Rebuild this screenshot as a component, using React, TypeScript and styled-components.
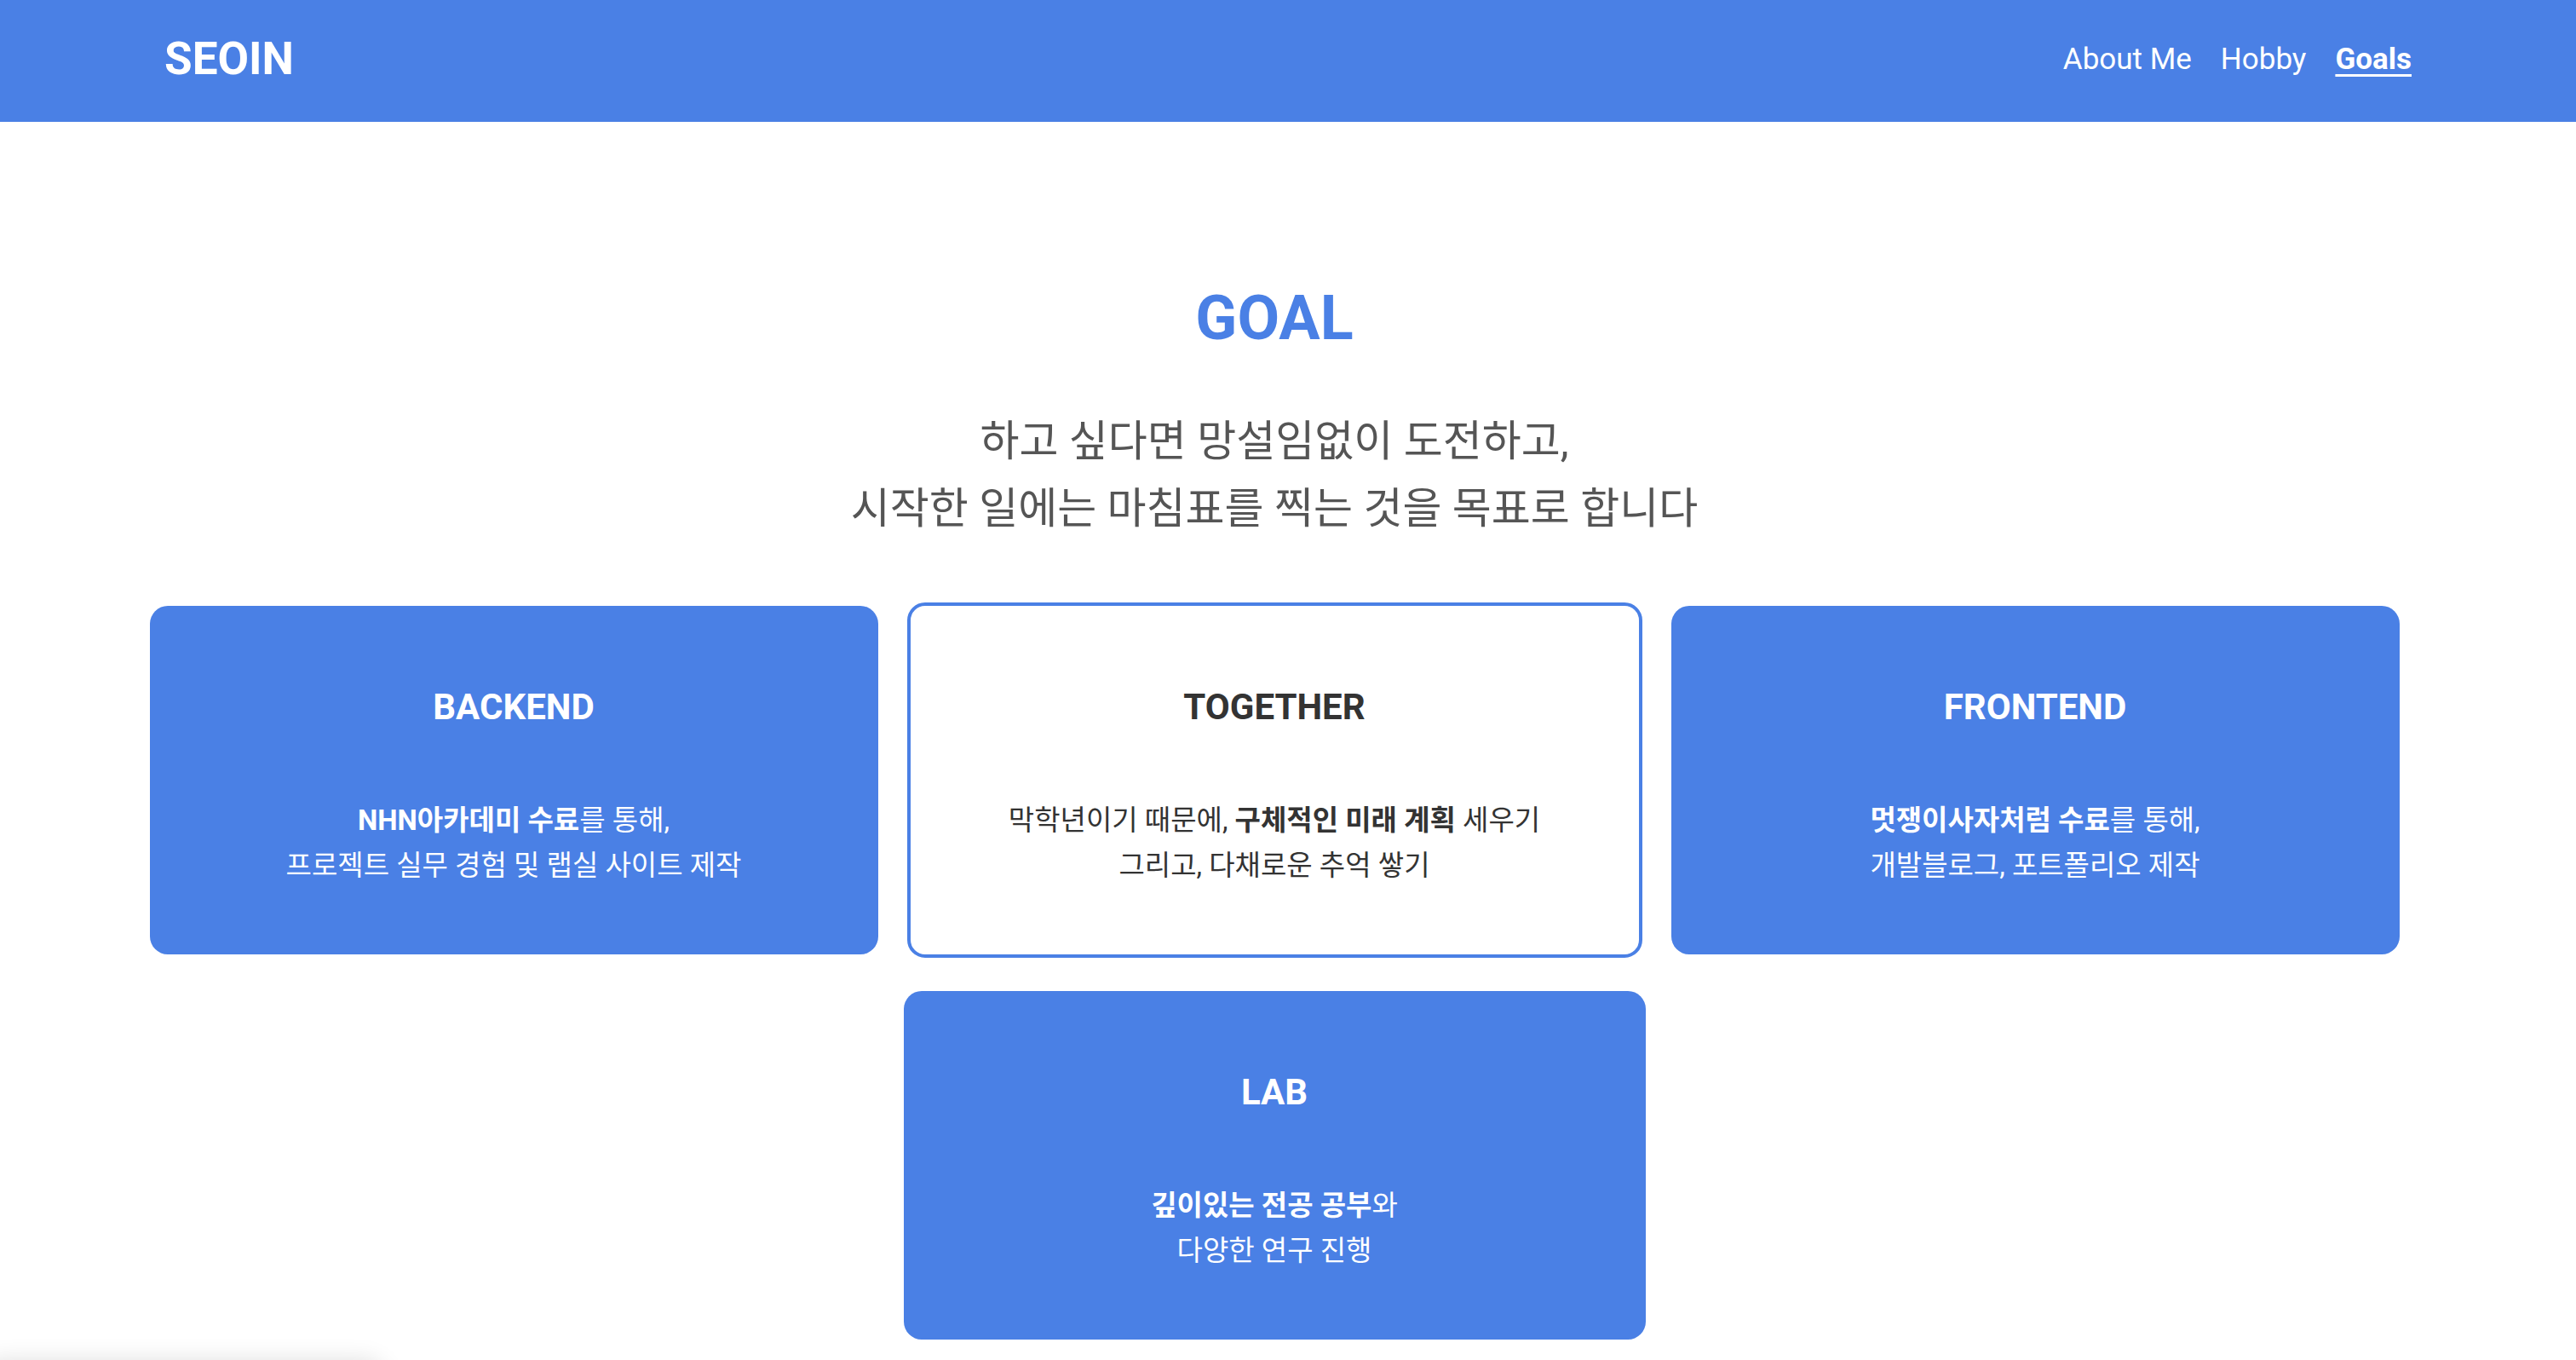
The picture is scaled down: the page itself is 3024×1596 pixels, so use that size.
import React from "react";
import styled, { createGlobalStyle } from "styled-components";

const BLUE = "#4a80e5";

const GlobalStyle = createGlobalStyle`
  * { box-sizing: border-box; }
  html, body { margin: 0; padding: 0; background: #ffffff; }
  body {
    font-family: Roboto, "Noto Sans CJK KR", "Noto Sans", sans-serif;
    color: #333;
    overflow: hidden;
  }
`;

const Header = styled.header`
  height: 143px;
  background: ${BLUE};
  display: flex;
  align-items: center;
  justify-content: space-between;
  padding: 0 193px 4px;
`;

const Logo = styled.div`
  color: #fff;
  font-family: Roboto, sans-serif;
  font-weight: 700;
  font-size: 53px;
  line-height: 1;
`;

const Nav = styled.nav`
  display: flex;
  align-items: center;
  gap: 34px;
`;

const NavLink = styled.a<{ $active?: boolean }>`
  color: #fff;
  font-family: Roboto, sans-serif;
  font-size: 35px;
  font-weight: ${(p) => (p.$active ? 700 : 400)};
  text-decoration: ${(p) => (p.$active ? "underline" : "none")};
  text-decoration-thickness: 3px;
  text-underline-offset: 6px;
  line-height: 1;
`;

const Main = styled.main`
  display: flex;
  flex-direction: column;
  align-items: center;
  padding: 188px 32px 0 0;
`;

const Title = styled.h1`
  margin: 0;
  color: ${BLUE};
  font-family: Roboto, sans-serif;
  font-weight: 700;
  font-size: 72px;
  line-height: 86px;
`;

const Subtitle = styled.p`
  margin: 62px 0 0;
  color: #555;
  font-size: 50px;
  line-height: 79px;
  text-align: center;
  font-family: Roboto, "Noto Sans CJK KR", sans-serif;
`;

const Grid = styled.div`
  align-self: stretch;
  display: flex;
  flex-wrap: wrap;
  justify-content: center;
  align-items: center;
  column-gap: 34px;
  row-gap: 39px;
  margin-top: 70px;
  padding: 0 175px;
`;

const Card = styled.section<{ $outline?: boolean; $width: number }>`
  width: ${(p) => p.$width}px;
  border-radius: 21px;
  background: ${(p) => (p.$outline ? "#fff" : BLUE)};
  border: ${(p) => (p.$outline ? `4px solid ${BLUE}` : "none")};
  box-sizing: content-box;
  color: ${(p) => (p.$outline ? "#333" : "#fff")};
  display: flex;
  flex-direction: column;
  align-items: center;
  padding: 94px 0 78px;
  text-align: center;
`;

const CardTitle = styled.h2`
  margin: 0;
  font-family: Roboto, sans-serif;
  font-weight: 700;
  font-size: 42px;
  line-height: 50px;
`;

const CardBody = styled.p`
  margin: 81px 0 0;
  font-family: Roboto, "Noto Sans CJK KR", sans-serif;
  font-size: 33px;
  line-height: 53px;
  font-weight: 400;

  strong {
    font-weight: 700;
  }
`;

const FoldShadow = styled.div`
  position: fixed;
  left: -20px;
  bottom: -80px;
  width: 470px;
  height: 80px;
  border-radius: 20px;
  box-shadow: 0 0 28px rgba(0, 0, 0, 0.12);
  background: #fff;
`;

export default function App() {
  return (
    <>
      <GlobalStyle />
      <Header>
        <Logo>SEOIN</Logo>
        <Nav>
          <NavLink>About Me</NavLink>
          <NavLink>Hobby</NavLink>
          <NavLink $active>Goals</NavLink>
        </Nav>
      </Header>
      <Main>
        <Title>GOAL</Title>
        <Subtitle>
          하고 싶다면 망설임없이 도전하고,
          <br />
          시작한 일에는 마침표를 찍는 것을 목표로 합니다
        </Subtitle>
        <Grid>
          <Card $width={855}>
            <CardTitle>BACKEND</CardTitle>
            <CardBody>
              <strong>NHN아카데미 수료</strong>를 통해,
              <br />
              프로젝트 실무 경험 및 랩실 사이트 제작
            </CardBody>
          </Card>
          <Card $width={855} $outline>
            <CardTitle>TOGETHER</CardTitle>
            <CardBody>
              막학년이기 때문에, <strong>구체적인 미래 계획</strong> 세우기
              <br />
              그리고, 다채로운 추억 쌓기
            </CardBody>
          </Card>
          <Card $width={855}>
            <CardTitle>FRONTEND</CardTitle>
            <CardBody>
              <strong>멋쟁이사자처럼 수료</strong>를 통해,
              <br />
              개발블로그, 포트폴리오 제작
            </CardBody>
          </Card>
          <Card $width={871}>
            <CardTitle>LAB</CardTitle>
            <CardBody>
              <strong>깊이있는 전공 공부</strong>와
              <br />
              다양한 연구 진행
            </CardBody>
          </Card>
        </Grid>
      </Main>
      <FoldShadow />
    </>
  );
}
